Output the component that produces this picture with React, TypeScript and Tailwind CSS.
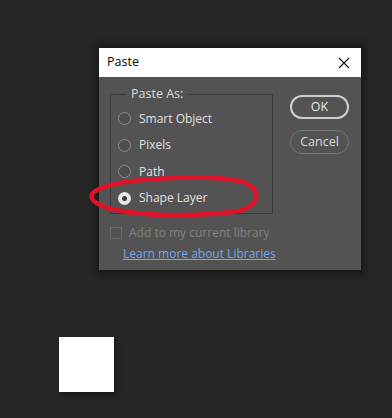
import React from 'react'

const options = ['Smart Object', 'Pixels', 'Path', 'Shape Layer']

function Radio({checked}: {checked: boolean}) {
  if (checked) {
    return (
      <span className="flex h-[13px] w-[13px] items-center justify-center rounded-full bg-[#e6e6e6]">
        <span className="h-[5px] w-[5px] rounded-full bg-[#3a3a3a]" />
      </span>
    )
  }
  return <span className="h-[13px] w-[13px] rounded-full border border-[#8c8c8c] bg-[#4d4d4d]" />
}

export default function App() {
  return (
    <div className="h-[418px] w-[392px] overflow-hidden bg-[#262626] pt-[48px] font-['Open_Sans',sans-serif]">
      <div className="ml-[99px] w-[262px] shadow-[0_0_8px_4px_rgba(0,0,0,0.35)]">
        <div className="flex h-[29px] items-center justify-between bg-white pl-[8px] pr-[8px]">
          <span className="text-[12.5px] text-black">Paste</span>
          <svg width="12" height="12" viewBox="0 0 12 12" className="mr-[3px]">
            <path d="M1 1 L11 11 M11 1 L1 11" stroke="#111" strokeWidth="1.1" />
          </svg>
        </div>
        <div className="relative h-[193px] bg-[#535353] pl-[11px] pt-[8px]">
          <div className="flex">
            <fieldset className="h-[129px] w-[163px] border border-[#3c3c3c] pl-[7px]">
              <legend className="ml-[8px] px-[5px] text-[12.5px] leading-[18px] text-[#dcdcdc]">Paste As:</legend>
              <div className="mt-[6px] flex flex-col gap-[7.5px]">
                {options.map((o, i) => (
                  <div key={o} className="flex h-[19px] items-center gap-[8px]">
                    <Radio checked={i === 3} />
                    <span className="text-[12px] text-[#e0e0e0]">{o}</span>
                  </div>
                ))}
              </div>
            </fieldset>
            <div className="ml-[17px] mt-[10px] flex flex-col gap-[11px]">
              <button className="h-[24px] w-[59px] rounded-full border-2 border-[#cfcfcf] text-[12.5px] text-[#e8e8e8]">OK</button>
              <button className="h-[24px] w-[59px] rounded-full border border-[#737373] text-[12.5px] text-[#dadada]">Cancel</button>
            </div>
          </div>
          <div className="mt-[10px] flex items-center gap-[7px]">
            <span className="h-[12px] w-[12px] border border-[#6a6a6a]" />
            <span className="text-[12px] text-[#808080]">Add to my current library</span>
          </div>
          <div className="ml-[13px] mt-[3px] text-[12px] text-[#70a8ec] underline">Learn more about Libraries</div>
          <svg className="pointer-events-none absolute left-[-14px] top-[96px]" width="180" height="46" viewBox="0 0 180 46">
            <path
              d="M14 16 C40 4, 124 2, 154 8 C177 13, 177 32, 154 38 C112 44, 50 44, 20 34 C6 29, 2 22, 12 17"
              fill="none"
              stroke="#e0112b"
              strokeWidth="4.5"
              strokeLinecap="round"
            />
          </svg>
        </div>
      </div>
      <div className="ml-[59px] mt-[67px] h-[55px] w-[55px] bg-white shadow-[2px_3px_6px_rgba(0,0,0,0.4)]" />
    </div>
  )
}
